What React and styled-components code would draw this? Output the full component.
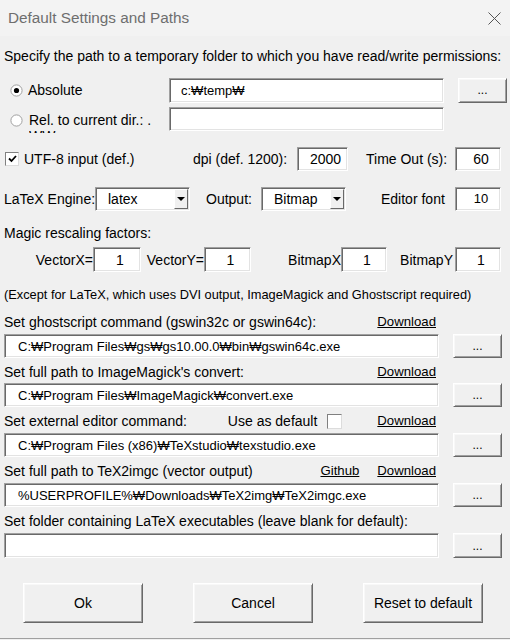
import React from 'react'
import styled, { createGlobalStyle } from 'styled-components'

const GlobalStyle = createGlobalStyle`
  html, body { margin: 0; padding: 0; background: #f0f0f0; }
  body {
    font-family: "Liberation Sans", Arial, sans-serif;
    font-size: 14px;
    color: #000;
  }
`

const Window = styled.div`
  width: 510px;
  height: 638px;
  background: #f0f0f0;
  border-bottom: 1px solid #a0a0a0;
  display: flex;
  flex-direction: column;
`

const TitleBar = styled.div`
  height: 36px;
  flex: none;
  display: flex;
  align-items: center;
  justify-content: space-between;
  padding: 0 9px 0 8px;
  background: #f3f3f3;
  color: #6e6e6e;
  font-size: 15.3px;
`

const Content = styled.div`
  display: flex;
  flex-direction: column;
  padding: 0 8px 0 4px;
`

const Line = styled.div`
  height: 16px;
  line-height: 16px;
  margin-top: ${p => p.$mt || 0}px;
  white-space: nowrap;
  font-size: ${p => p.$fs || 14}px;
`

const Row = styled.div`
  display: flex;
  align-items: center;
  height: ${p => p.$h || 24}px;
  margin-top: ${p => p.$mt || 0}px;
`

const LabelRow = styled.div`
  display: flex;
  align-items: center;
  width: 432px;
  height: 16px;
  line-height: 16px;
  margin-top: ${p => p.$mt || 0}px;
  white-space: nowrap;
`

const Spacer = styled.div`
  flex: 1;
`

const Cell = styled.div`
  flex: none;
  width: ${p => p.$w}px;
  margin-left: ${p => p.$ml || 0}px;
  text-align: ${p => p.$align || 'left'};
  padding-right: ${p => p.$pr || 0}px;
  box-sizing: border-box;
  white-space: nowrap;
`

const ClipLabel = styled.div`
  flex: none;
  width: 140px;
  margin-left: 6px;
  height: 26px;
  line-height: 16px;
  padding-top: 5px;
  box-sizing: border-box;
  overflow: hidden;
  align-self: flex-start;
`

const Sunken = styled.div`
  flex: none;
  box-sizing: border-box;
  width: ${p => p.$w}px;
  height: ${p => p.$h || 24}px;
  margin-left: ${p => p.$ml || 0}px;
  background: #fff;
  border: 1px solid;
  border-color: #a0a0a0 #fff #fff #a0a0a0;
  box-shadow: inset 1px 1px 0 #696969, inset -1px -1px 0 #e3e3e3;
  display: flex;
  align-items: center;
  padding-left: ${p => p.$pl ?? 11}px;
  justify-content: ${p => (p.$center ? 'center' : 'flex-start')};
  font-size: ${p => p.$fs || 14}px;
  white-space: nowrap;
  overflow: hidden;
`

const Raised = styled.div`
  flex: none;
  box-sizing: border-box;
  width: ${p => p.$w}px;
  height: ${p => p.$h}px;
  margin-left: ${p => p.$ml || 0}px;
  border: 1px solid;
  border-color: #fff #696969 #696969 #fff;
  box-shadow: inset 1px 1px 0 #f8f8f8, inset -1px -1px 0 #a0a0a0;
  background: #f0f0f0;
  display: flex;
  align-items: center;
  justify-content: center;
  font-size: ${p => p.$fs || 14}px;
`

const SelectBox = styled(Sunken)`
  padding-left: 12px;
  padding-right: 1px;
  justify-content: space-between;
`

const ArrowBtn = styled.div`
  width: 14px;
  height: 20px;
  box-sizing: border-box;
  border: 1px solid;
  border-color: #fff #696969 #696969 #fff;
  background: #f0f0f0;
  display: flex;
  align-items: center;
  justify-content: center;
`

const Link = styled.span`
  text-decoration: underline;
  font-size: 13.2px;
  margin-left: ${p => p.$ml || 0}px;
`

const CheckBox = styled.div`
  flex: none;
  width: ${p => p.$s || 14}px;
  height: ${p => p.$s || 14}px;
  box-sizing: border-box;
  margin-left: ${p => p.$ml || 0}px;
  background: #fff;
  border: 1px solid;
  border-color: #808080 #dcdcdc #dcdcdc #808080;
  display: flex;
  align-items: center;
  justify-content: center;
`

const RadioIcon = styled.svg`
  flex: none;
  margin-left: 6px;
`

const Footer = styled.div`
  display: flex;
  gap: 50px;
  margin-top: 25px;
  padding-left: 19px;
`

const Radio = ({ checked, top }) => (
  <RadioIcon width="13" height="13" viewBox="0 0 13 13" style={top ? { alignSelf: 'flex-start', marginTop: top } : undefined}>
    <circle cx="6.5" cy="6.5" r="5.6" fill="#fff" stroke="#a0a0a0" />
    {checked && <circle cx="6.5" cy="6.5" r="2.6" fill="#000" />}
  </RadioIcon>
)

const Check = () => (
  <svg width="9" height="8" viewBox="0 0 9 8">
    <path d="M1 3.5l2.5 2.5L8 1" fill="none" stroke="#000" strokeWidth="1.8" />
  </svg>
)

const Select = ({ w, ml, value }) => (
  <SelectBox $w={w} $ml={ml}>
    <span>{value}</span>
    <ArrowBtn>
      <svg width="8" height="4" viewBox="0 0 8 4">
        <path d="M0 0h8L4 4z" fill="#000" />
      </svg>
    </ArrowBtn>
  </SelectBox>
)

const Browse = ({ h = 24 }) => <Raised $w={49} $h={h} $ml={14} $fs={12}>...</Raised>

const PathField = ({ value, mt, h = 24 }) => (
  <Row $h={h} $mt={mt}>
    <Sunken $w={435} $h={h} $pl={13} $fs={13}>{value}</Sunken>
    <Browse h={h} />
  </Row>
)

export default function App() {
  return (
    <Window>
      <GlobalStyle />
      <TitleBar>
        <span>Default Settings and Paths</span>
        <svg width="13" height="13" viewBox="0 0 13 13">
          <path d="M0.5 0.5l12 12M12.5 0.5l-12 12" stroke="#555" strokeWidth="1" />
        </svg>
      </TitleBar>
      <Content>
        <Line $mt={12}>Specify the path to a temporary folder to which you have read/write permissions:</Line>

        <Row $h={26} $mt={13}>
          <Radio checked />
          <Cell $w={141} $ml={5}>Absolute</Cell>
          <Sunken $w={275} $h={25} $fs={13}>c:₩temp₩</Sunken>
          <Browse h={25} />
        </Row>

        <Row $h={24} $mt={4}>
          <Radio top={7} />
          <ClipLabel>Rel. to current dir.: .<br />₩₩</ClipLabel>
          <Sunken $w={275} $h={24}></Sunken>
        </Row>

        <Row $h={24} $mt={16}>
          <CheckBox $ml={1} $s={14}><Check /></CheckBox>
          <Cell $w={169} $ml={5}>UTF-8 input (def.)</Cell>
          <Cell $w={104}>dpi (def. 1200):</Cell>
          <Sunken $w={51} $pl={6} $center>2000</Sunken>
          <Cell $w={89} $ml={18}>Time Out (s):</Cell>
          <Sunken $w={46} $pl={6} $center>60</Sunken>
        </Row>

        <Row $h={25} $mt={15}>
          <Cell $w={91}>LaTeX Engine:</Cell>
          <Select w={95} value="latex" />
          <Cell $w={55} $ml={16}>Output:</Cell>
          <Select w={85} value="Bitmap" />
          <Cell $w={74} $ml={35}>Editor font</Cell>
          <Sunken $w={46} $pl={6} $center $fs={13}>10</Sunken>
        </Row>

        <Line $mt={14}>Magic rescaling factors:</Line>

        <Row $h={25} $mt={6}>
          <Cell $w={89} $align="right">VectorX=</Cell>
          <Sunken $w={48} $h={25} $pl={6} $center>1</Sunken>
          <Cell $w={63} $align="right">VectorY=</Cell>
          <Sunken $w={47} $h={25} $pl={6} $center>1</Sunken>
          <Cell $w={90} $align="right">BitmapX</Cell>
          <Sunken $w={46} $h={25} $pl={6} $center>1</Sunken>
          <Cell $w={68} $align="right" $pr={2}>BitmapY</Cell>
          <Sunken $w={46} $h={25} $pl={6} $center>1</Sunken>
        </Row>

        <Line $mt={15} $fs={12.8}>(Except for LaTeX, which uses DVI output, ImageMagick and Ghostscript required)</Line>

        <LabelRow $mt={11}>
          <span>Set ghostscript command (gswin32c or gswin64c):</span>
          <Spacer />
          <Link>Download</Link>
        </LabelRow>
        <PathField mt={4} value="C:₩Program Files₩gs₩gs10.00.0₩bin₩gswin64c.exe" />

        <LabelRow $mt={6}>
          <span>Set full path to ImageMagick's convert:</span>
          <Spacer />
          <Link>Download</Link>
        </LabelRow>
        <PathField mt={3} value="C:₩Program Files₩ImageMagick₩convert.exe" />

        <LabelRow $mt={6}>
          <span>Set external editor command:</span>
          <Spacer />
          <span>Use as default</span>
          <CheckBox $ml={10} $s={15} />
          <Link $ml={35}>Download</Link>
        </LabelRow>
        <PathField mt={4} value="C:₩Program Files (x86)₩TeXstudio₩texstudio.exe" />

        <LabelRow $mt={6}>
          <span>Set full path to TeX2imgc (vector output)</span>
          <Spacer />
          <Link>Github</Link>
          <Link $ml={18}>Download</Link>
        </LabelRow>
        <PathField mt={4} value="%USERPROFILE%₩Downloads₩TeX2img₩TeX2imgc.exe" />

        <Line $mt={6}>Set folder containing LaTeX executables (leave blank for default):</Line>
        <PathField mt={4} h={25} value="" />

        <Footer>
          <Raised $w={120} $h={40} $fs={14}>Ok</Raised>
          <Raised $w={120} $h={40} $fs={14}>Cancel</Raised>
          <Raised $w={120} $h={40} $fs={14}>Reset to default</Raised>
        </Footer>
      </Content>
    </Window>
  )
}
